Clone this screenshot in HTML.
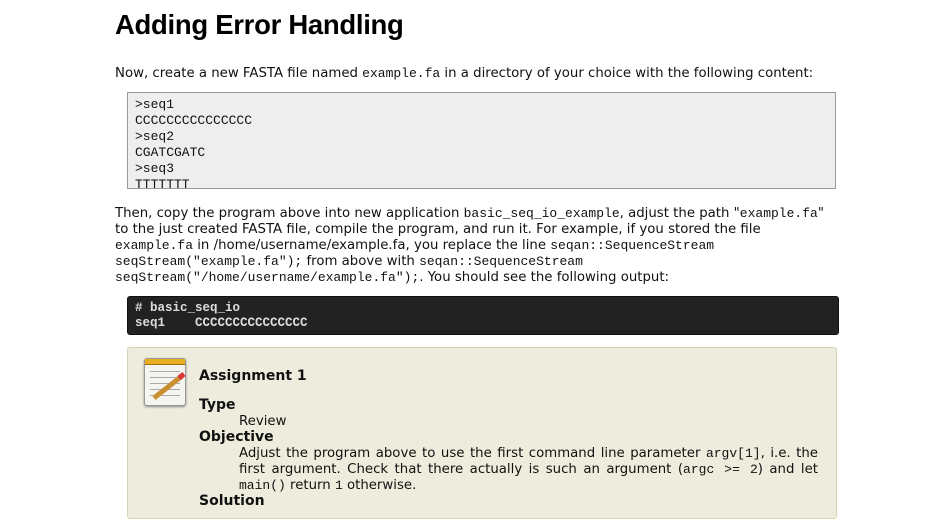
<!DOCTYPE html>
<html><head><meta charset="utf-8"><style>
body{margin:0;background:#fff;width:946px;height:510px;overflow:hidden;font-family:"DejaVu Sans",Verdana,sans-serif;font-size:13.3px;color:#111;}
.c{position:absolute;left:115px;width:730px;white-space:nowrap;}
h1{position:absolute;left:115px;top:9px;margin:0;font-family:"Liberation Sans",sans-serif;font-size:27.5px;font-weight:bold;letter-spacing:-0.3px;color:#000;}
p{margin:0;line-height:16px;}
code{font-family:"Liberation Mono",monospace;font-size:13px;line-height:1;}
.pre{position:absolute;left:127px;top:92px;width:700px;height:81px;background:#eee;border:1px solid #999;padding:4px 0 10px 7px;font-family:"Liberation Mono",monospace;font-size:13px;line-height:16px;white-space:pre;overflow:hidden;}
.dark{position:absolute;left:127px;top:296px;width:703px;height:32px;background:#222;border:1px solid #111;border-radius:3px;padding:4px 0 1px 7px;font-family:"Liberation Mono",monospace;font-size:12.5px;font-weight:bold;line-height:15px;color:#ddd;white-space:pre;}
.as{position:absolute;left:127px;top:347px;width:708px;height:170px;background:#eeeddd;border:1px solid #d6d5b5;border-radius:3px;}
.h{position:absolute;left:71px;font-size:14px;font-weight:bold;}
.j{text-align:justify;text-align-last:justify;white-space:nowrap;height:16px;}
</style></head><body>
<h1>Adding Error Handling</h1>
<p class="c" style="top:66px;">Now, create a new FASTA file named <code>example.fa</code> in a directory of your choice with the following content:</p>
<div class="pre">&gt;seq1
CCCCCCCCCCCCCCC
&gt;seq2
CGATCGATC
&gt;seq3
TTTTTTT</div>
<p class="c" style="top:206px;">Then, copy the program above into new application <code>basic_seq_io_example</code>, adjust the path "<code>example.fa</code>"<br>to the just created FASTA file, compile the program, and run it. For example, if you stored the file<br><code>example.fa</code> in /home/username/example.fa, you replace the line <code>seqan::SequenceStream</code><br><code>seqStream("example.fa");</code> from above with <code>seqan::SequenceStream</code><br><code>seqStream("/home/username/example.fa");</code>. You should see the following output:</p>
<div class="dark"># basic_seq_io
seq1    CCCCCCCCCCCCCCC</div>
<div class="as">
  <div style="position:absolute;left:16px;top:10px;width:40px;height:46px;background:#f4f4f0;border:1px solid #999;border-radius:3px;box-shadow:0 1px 2px #888;">
    <div style="height:5px;background:#e8b020;border-bottom:1px solid #a07010"></div>
    <div style="margin:6px 5px;height:1px;background:#aaa;box-shadow:0 6px #aaa,0 12px #aaa,0 18px #aaa,0 24px #aaa"></div>
  </div>
  <svg style="position:absolute;left:20px;top:20px" width="40" height="34"><line x1="6" y1="30" x2="34" y2="8" stroke="#c89030" stroke-width="5"/><line x1="31" y1="10" x2="36" y2="6" stroke="#d33" stroke-width="5"/></svg>
  <div class="h" style="top:20px;">Assignment 1</div>
  <div class="h" style="top:49px;">Type</div>
  <div style="position:absolute;left:111px;top:66px;">Review</div>
  <div class="h" style="top:81px;">Objective</div>
  <div style="position:absolute;left:111px;top:98px;width:579px;line-height:16px;">
    <div class="j">Adjust the program above to use the first command line parameter <code>argv[1]</code>, i.e. the</div>
    <div class="j">first argument. Check that there actually is such an argument (<code>argc &gt;= 2</code>) and let</div>
    <div style="height:16px;white-space:nowrap"><code>main()</code> return <code>1</code> otherwise.</div>
  </div>
  <div class="h" style="top:145px;">Solution</div>
</div>
</body></html>
